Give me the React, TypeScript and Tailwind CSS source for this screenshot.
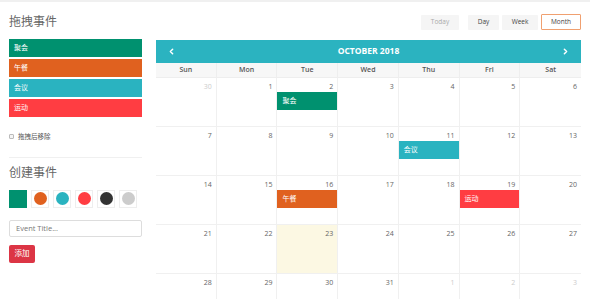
import { ChevronLeft, ChevronRight } from 'lucide-react'

const font = { fontFamily: '"Open Sans", "Noto Sans CJK SC", sans-serif' }

const dragEvents = [
  { title: '聚会', color: 'bg-[#00916f]' },
  { title: '午餐', color: 'bg-[#e0611f]' },
  { title: '会议', color: 'bg-[#2ab3c0]' },
  { title: '运动', color: 'bg-[#ff3d42]' },
]

const swatches = ['bg-[#e0611f]', 'bg-[#2ab3c0]', 'bg-[#ff3d42]', 'bg-[#333333]', 'bg-[#cccccc]']

type Day = { n: number; muted?: boolean; today?: boolean; event?: { title: string; color: string } }

const weeks: Day[][] = [
  [{ n: 30, muted: true }, { n: 1 }, { n: 2, event: { title: '聚会', color: 'bg-[#00916f]' } }, { n: 3 }, { n: 4 }, { n: 5 }, { n: 6 }],
  [{ n: 7 }, { n: 8 }, { n: 9 }, { n: 10 }, { n: 11, event: { title: '会议', color: 'bg-[#2ab3c0]' } }, { n: 12 }, { n: 13 }],
  [{ n: 14 }, { n: 15 }, { n: 16, event: { title: '午餐', color: 'bg-[#e0611f]' } }, { n: 17 }, { n: 18 }, { n: 19, event: { title: '运动', color: 'bg-[#ff3d42]' } }, { n: 20 }],
  [{ n: 21 }, { n: 22 }, { n: 23, today: true }, { n: 24 }, { n: 25 }, { n: 26 }, { n: 27 }],
  [{ n: 28 }, { n: 29 }, { n: 30 }, { n: 31 }, { n: 1, muted: true }, { n: 2, muted: true }, { n: 3, muted: true }],
]

const dayNames = ['Sun', 'Mon', 'Tue', 'Wed', 'Thu', 'Fri', 'Sat']

export default function App() {
  return (
    <div className="h-[299px] w-[590px] overflow-hidden bg-white border-t-2 border-[#f0f0f0]" style={font}>
      <div className="flex gap-[14px] pl-[9px] pr-[9px] pt-[12px]">
        {/* sidebar */}
        <div className="w-[133px] shrink-0">
          <h2 className="text-[12px] leading-[16px] text-[#666] mb-[9px]">拖拽事件</h2>
          <div className="flex flex-col gap-[2px]">
            {dragEvents.map((e) => (
              <div key={e.title} className={`${e.color} h-[18px] flex items-center px-[5px] text-[7px] text-white`}>
                {e.title}
              </div>
            ))}
          </div>
          <label className="flex items-center gap-[4px] mt-[15px] text-[6.5px] text-[#555]">
            <span className="w-[5px] h-[5px] border border-[#bbb] bg-[#f4f4f4] rounded-[1px]" />
            拖拽后移除
          </label>
          <div className="h-px bg-[#f0f0f0] mt-[15px] mb-[7px]" />
          <h2 className="text-[12px] leading-[16px] text-[#666] mb-[9px]">创建事件</h2>
          <div className="flex gap-[4px]">
            <div className="w-[18px] h-[18px] bg-[#00916f]" />
            {swatches.map((c) => (
              <div key={c} className="w-[18px] h-[18px] border border-[#eee] flex items-center justify-center">
                <span className={`${c} w-[13px] h-[13px] rounded-full`} />
              </div>
            ))}
          </div>
          <div className="mt-[12px] h-[17px] border border-[#ddd] rounded-[2px] flex items-center px-[6px] text-[7.5px] text-[#777]">
            Event Title...
          </div>
          <button className="mt-[8px] h-[18px] w-[26px] rounded-[2px] bg-[#dc3545] text-white text-[7.5px] flex items-center justify-center">
            添加
          </button>
        </div>

        {/* calendar */}
        <div className="w-[425px]">
          <div className="flex justify-end items-center h-[16px] mb-[10px]">
            <button className="h-[15px] w-[38px] bg-[#f5f5f5] text-[6.5px] text-[#aaa] rounded-[1px] mr-[9px]">Today</button>
            <button className="h-[15px] w-[31px] bg-[#f5f5f5] text-[6.5px] text-[#444] rounded-[1px] mr-[3px]">Day</button>
            <button className="h-[15px] w-[36px] bg-[#f5f5f5] text-[6.5px] text-[#444] rounded-[1px] mr-[3px]">Week</button>
            <button className="h-[16px] w-[40px] bg-white border border-[#f0a070] text-[6.5px] text-[#444] rounded-[1px]">Month</button>
          </div>
          <div className="h-[23px] bg-[#2bb3c0] flex items-center justify-between px-[11px] text-white">
            <ChevronLeft size={9} strokeWidth={4} />
            <span className="text-[8.5px] font-bold">OCTOBER 2018</span>
            <ChevronRight size={9} strokeWidth={4} />
          </div>
          <div className="grid grid-cols-7 bg-[#f7f7f7] h-[15px] border-b border-[#eee]">
            {dayNames.map((d) => (
              <div key={d} className="flex items-center justify-center text-[7px] font-semibold text-[#555] border-r border-[#eee] last:border-r-0">
                {d}
              </div>
            ))}
          </div>
          {weeks.map((w, i) => (
            <div key={i} className="grid grid-cols-7 h-[49px] border-b border-[#f0f0f0]">
              {w.map((d, j) => (
                <div
                  key={j}
                  className={`border-r border-[#f0f0f0] last:border-r-0 ${d.today ? 'bg-[#fcf8e3]' : ''}`}
                >
                  <div className={`text-right pr-[4px] pt-[4px] text-[7px] leading-[10px] h-[14px] ${d.muted ? 'text-[#ccc]' : 'text-[#666]'}`}>
                    {d.n}
                  </div>
                  {d.event && (
                    <div className={`${d.event.color} h-[18px] flex items-center px-[5px] text-[7px] text-white`}>
                      {d.event.title}
                    </div>
                  )}
                </div>
              ))}
            </div>
          ))}
        </div>
      </div>
    </div>
  )
}
